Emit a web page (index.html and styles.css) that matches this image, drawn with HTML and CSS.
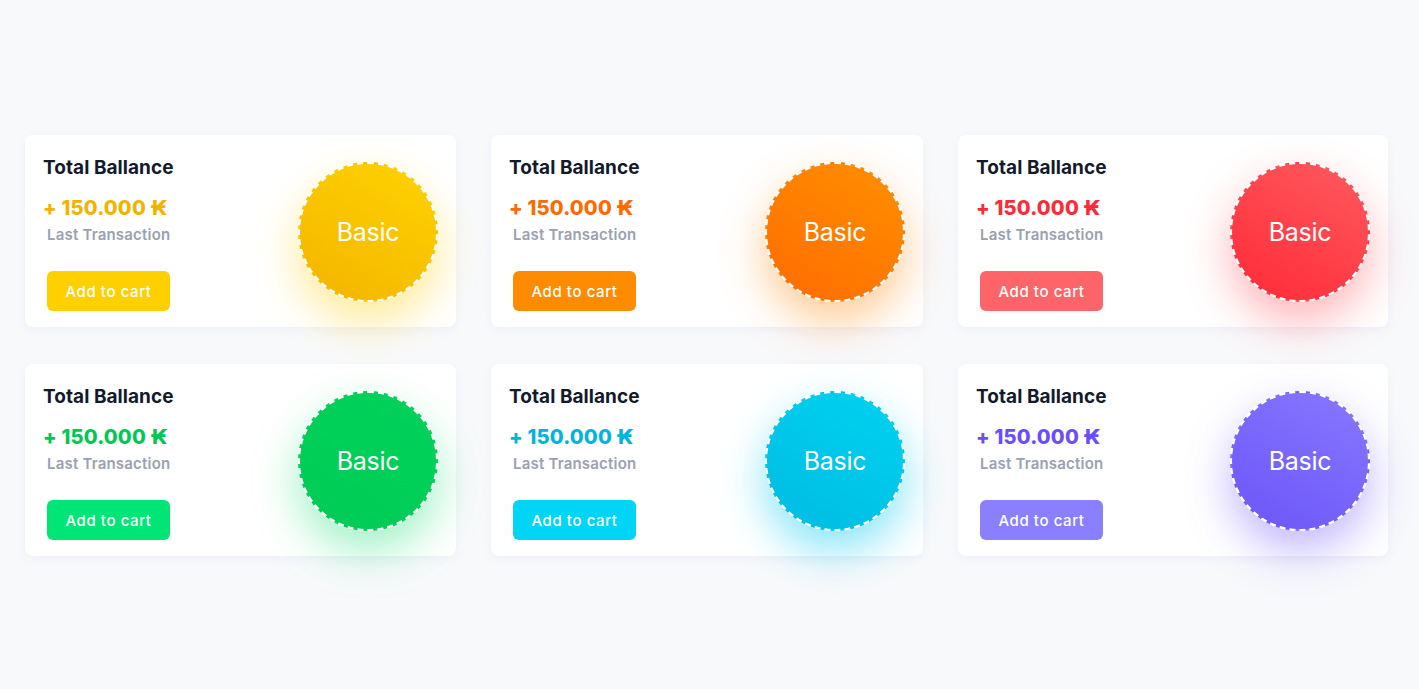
FILE: index.html
```html
<!DOCTYPE html>
<html lang="en">
<head>
<meta charset="utf-8">
<title>Cards</title>
<link rel="stylesheet" href="styles.css">
</head>
<body>
<main class="grid">
  <div class="card yellow">
    <div class="info">
      <h3 class="title">Total Ballance</h3>
      <div class="amount">+ 150.000 ₭</div>
      <div class="label">Last Transaction</div>
      <button class="btn">Add to cart</button>
    </div>
    <div class="badge">Basic</div>
  </div>
  <div class="card orange">
    <div class="info">
      <h3 class="title">Total Ballance</h3>
      <div class="amount">+ 150.000 ₭</div>
      <div class="label">Last Transaction</div>
      <button class="btn">Add to cart</button>
    </div>
    <div class="badge">Basic</div>
  </div>
  <div class="card red">
    <div class="info">
      <h3 class="title">Total Ballance</h3>
      <div class="amount">+ 150.000 ₭</div>
      <div class="label">Last Transaction</div>
      <button class="btn">Add to cart</button>
    </div>
    <div class="badge">Basic</div>
  </div>
  <div class="card green">
    <div class="info">
      <h3 class="title">Total Ballance</h3>
      <div class="amount">+ 150.000 ₭</div>
      <div class="label">Last Transaction</div>
      <button class="btn">Add to cart</button>
    </div>
    <div class="badge">Basic</div>
  </div>
  <div class="card cyan">
    <div class="info">
      <h3 class="title">Total Ballance</h3>
      <div class="amount">+ 150.000 ₭</div>
      <div class="label">Last Transaction</div>
      <button class="btn">Add to cart</button>
    </div>
    <div class="badge">Basic</div>
  </div>
  <div class="card purple">
    <div class="info">
      <h3 class="title">Total Ballance</h3>
      <div class="amount">+ 150.000 ₭</div>
      <div class="label">Last Transaction</div>
      <button class="btn">Add to cart</button>
    </div>
    <div class="badge">Basic</div>
  </div>
</main>
</body>
</html>
```
FILE: styles.css
```css
* { box-sizing: border-box; }
html, body { margin: 0; padding: 0; }
body {
  background: #f8f9fb;
  font-family: Inter, "Noto Sans", sans-serif;
  width: 1419px;
  height: 689px;
  overflow: hidden;
}
.grid {
  display: grid;
  grid-template-columns: 431px 432px 430px;
  column-gap: 35px;
  row-gap: 37px;
  padding: 135px 0 0 25px;
}
.card {
  height: 192px;
  background: #fff;
  border-radius: 8px;
  box-shadow: 0 3px 10px rgba(110, 125, 230, 0.07);
  display: flex;
  justify-content: space-between;
  align-items: center;
  padding: 0 18px 0 18px;
}
.info {
  display: flex;
  flex-direction: column;
  align-self: flex-start;
  padding-top: 22px;
}
.title {
  margin: 0;
  font-size: 19px;
  font-weight: 700;
  color: #131a2c;
  line-height: 22px;
  letter-spacing: 0.05px;
}
.amount {
  margin-top: 17px;
  font-size: 20px;
  font-weight: 800;
  line-height: 24px;
  letter-spacing: 0.2px;
}
.label {
  margin: 5px 0 0 4px;
  font-size: 15px;
  font-weight: 600;
  color: #9aa1b0;
  line-height: 20px;
  letter-spacing: 0.2px;
}
.btn {
  margin: 26px 0 0 4px;
  width: 123px;
  height: 40px;
  border: none;
  border-radius: 6px;
  color: #fff;
  font-family: Inter, "Noto Sans", sans-serif;
  font-size: 15px;
  font-weight: 500;
  letter-spacing: 0.6px;
  padding: 0;
}
.badge {
  margin-top: 2px;
  width: 140px;
  height: 140px;
  border-radius: 50%;
  border: 2px dashed #fff;
  display: flex;
  align-items: center;
  justify-content: center;
  color: #fff;
  font-size: 25px;
  font-weight: 400;
  letter-spacing: -0.3px;
}
.yellow .amount { color: #f2b300; }
.yellow .btn { background: #ffd000; }
.yellow .badge { background: linear-gradient(30deg, #f3b500, #ffd200); box-shadow: 0 20px 45px rgba(255, 204, 0, 0.42); }
.orange .amount { color: #ff6a00; }
.orange .btn { background: #ff8c00; }
.orange .badge { background: linear-gradient(30deg, #ff6c00, #ff8f00); box-shadow: 0 20px 45px rgba(255, 130, 0, 0.42); }
.red .amount { color: #ff2a37; }
.red .btn { background: #ff6568; }
.red .badge { background: linear-gradient(30deg, #ff2a37, #ff5a5f); box-shadow: 0 20px 45px rgba(255, 60, 70, 0.38); }
.green .amount { color: #00c853; }
.green .btn { background: #00e676; }
.green .badge { background: linear-gradient(30deg, #00cb55, #00d25a); box-shadow: 0 20px 45px rgba(0, 220, 100, 0.38); }
.cyan .amount { color: #00b4dc; }
.cyan .btn { background: #00d5f5; }
.cyan .badge { background: linear-gradient(30deg, #00bce2, #00d2f0); box-shadow: 0 20px 45px rgba(0, 200, 240, 0.48); }
.purple .amount { color: #6b4dff; }
.purple .btn { background: #8a80ff; }
.purple .badge { background: linear-gradient(30deg, #6c55f8, #8778ff); box-shadow: 0 20px 45px rgba(110, 85, 255, 0.42); }
```
